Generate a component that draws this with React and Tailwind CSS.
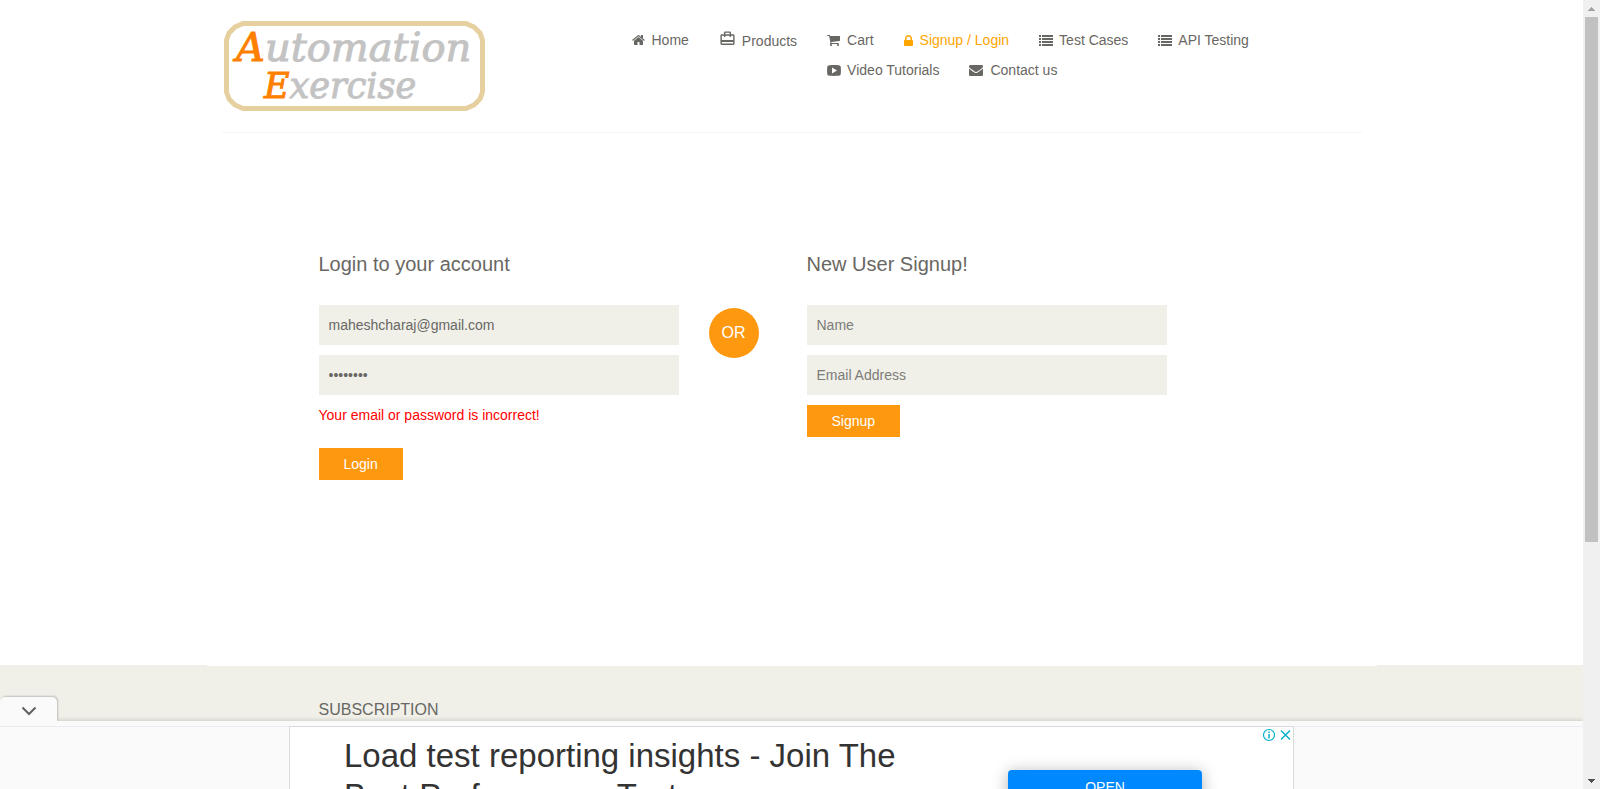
import React from "react";
import { MdCardTravel } from "react-icons/md";

function HomeIcon() {
  return (
    <svg width="13" height="10" viewBox="0 253 1664 1283" fill="currentColor" className="mr-[7px]" aria-hidden="true">
      <path d="M1408 992v480q0 26-19 45t-45 19H960v-384H704v384H320q-26 0-45-19t-19-45V992q0-1 .5-3t.5-3l575-474 575 474q1 2 1 6zm223-69l-62 74q-8 9-21 11h-3q-13 0-21-7L832 424l-692 577q-12 8-24 7-13-2-21-11l-62-74q-8-10-7-23.500T37 878l719-599q32-26 76-26t76 26l244 204V288q0-14 9-23t23-9h192q14 0 23 9t9 23v408l219 182q10 8 11 21.500t-7 23.500z" />
    </svg>
  );
}

function CartIcon() {
  return (
    <svg width="13" height="11" viewBox="0 256 1664 1408" fill="currentColor" className="mr-[7px]" aria-hidden="true">
      <path d="M640 1536q0 52-38 90t-90 38-90-38-38-90 38-90 90-38 90 38 38 90zm896 0q0 52-38 90t-90 38-90-38-38-90 38-90 90-38 90 38 38 90zm128-1088v512q0 24-16.500 42.500T1607 1024L563 1146q13 60 13 70 0 16-24 64h920q26 0 45 19t19 45-19 45-45 19H448q-26 0-45-19t-19-45q0-11 8-31.500t16-36 21.500-40T445 1207L268 384H64q-26 0-45-19T0 320t19-45 45-19h256q16 0 28.500 6.500T368 278t13 24.500 8 26 5.500 29.500 4.500 26h1201q26 0 45 19t19 45z" />
    </svg>
  );
}

function LockIcon() {
  return (
    <svg width="9" height="11" viewBox="0 128 1152 1408" fill="currentColor" className="mr-[7px]" aria-hidden="true">
      <path d="M320 768h512V576q0-106-75-181t-181-75-181 75-75 181v192zm832 96v576q0 40-28 68t-68 28H96q-40 0-68-28t-28-68V864q0-40 28-68t68-28h32V576q0-184 132-316t316-132 316 132 132 316v192h32q40 0 68 28t28 68z" />
    </svg>
  );
}

function EnvelopeIcon() {
  return (
    <svg width="14" height="11" viewBox="0 256 1792 1408" fill="currentColor" className="mr-[7px]" aria-hidden="true">
      <path d="M1792 710v794q0 66-47 113t-113 47H160q-66 0-113-47T0 1504V710q44 49 101 87 362 246 497 345 57 42 92.500 65.500t94.500 48T895 1280h2q52 0 110.500-24.500t94.500-48T1194.500 1142q170-123 498-345 57-39 100-87zm0-294q0 79-49 151t-122 123q-376 261-468 325-10 7-42.500 30.500t-54 38-52 32.500-57.500 27-50 9h-2q-23 0-50-9t-57.500-27-52-32.500-54-38T639 1015q-91-64-262-182.500T172 690q-62-42-117-115.500T0 438q0-78 41.500-130T160 256h1472q65 0 112.500 47t47.500 113z" />
    </svg>
  );
}

function ListIcon() {
  return (
    <svg width="14" height="11" viewBox="0 0 14 11" fill="currentColor" shapeRendering="crispEdges" className="mr-[6px]" aria-hidden="true">
      {[0, 3, 6, 9].map((y) => (
        <g key={y}>
          <rect x="0" y={y} width="2" height="2" />
          <rect x="3" y={y} width="11" height="2" />
        </g>
      ))}
    </svg>
  );
}

function PlayIcon() {
  return (
    <svg width="14" height="11" viewBox="0 0 14 11" fill="currentColor" className="mr-[6px]" aria-hidden="true">
      <path
        fillRule="evenodd"
        d="M2.5.2C5 0 9 0 11.500.2 13 .3 13.700 1 13.800 2.500 14 4.500 14 6.500 13.800 8.500 13.700 10 13 10.700 11.500 10.800 9 11 5 11 2.500 10.800 1 10.700.300 10 .200 8.500 0 6.500 0 4.500.200 2.500.300 1 1 .300 2.500.200ZM5 2.500V8.500L10 5.500Z"
      />
    </svg>
  );
}

function NavItem({ icon, children, active, className = "" }) {
  return (
    <li>
      <a
        href="#"
        className={`flex h-5 items-center whitespace-nowrap text-sm leading-5 ${
          active ? "text-[#ffa500]" : "text-[#696763]"
        } ${className}`}
      >
        {icon}
        {children}
      </a>
    </li>
  );
}

function Logo() {
  return (
    <a href="#" aria-label="Automation Exercise" className="block">
      <svg width="261" height="90" viewBox="0 0 261 90" fontFamily="'DejaVu Serif', serif" fontStyle="italic">
        <path
          d="M19 2.500H242L250 6 256 12 258.500 19V71L256 78 250 84 242 87.500H19L11 84 5 78 2.500 71V19L5 12 11 6Z"
          fill="#fff"
          stroke="#e6d0a0"
          strokeWidth="5"
          strokeLinejoin="round"
        />
        <text x="12" y="40" fontSize="40" fill="#c3c3c3" stroke="#c3c3c3">
          <tspan fill="#ff8000" stroke="#ff8000">A</tspan>utomation
        </text>
        <text x="40" y="77" fontSize="35" fill="#c3c3c3" stroke="#c3c3c3">
          <tspan fill="#ff8000" stroke="#ff8000">E</tspan>xercise
        </text>
      </svg>
    </a>
  );
}

function Header() {
  return (
    <header className="mx-auto w-full max-w-[1140px]">
      <div className="flex items-start border-b border-[#f5f5f5] pb-[21px] pt-[21px]">
        <div className="w-[410px] shrink-0 pl-[2px]">
          <Logo />
        </div>
        <nav className="flex pt-[9px]">
          <ul className="flex">
            <NavItem icon={<HomeIcon />} className="mr-[30px]">Home</NavItem>
            <NavItem icon={<MdCardTravel size={17} className="mb-[5px] mr-[6px]" />} className="mr-[30px] pt-[2px]">
              Products
            </NavItem>
          </ul>
          <ul className="flex max-w-[460px] flex-wrap gap-x-[30px] gap-y-[10px]">
            <NavItem icon={<CartIcon />}>Cart</NavItem>
            <NavItem active icon={<LockIcon />}>Signup / Login</NavItem>
            <NavItem icon={<ListIcon />}>Test Cases</NavItem>
            <NavItem icon={<ListIcon />}>API Testing</NavItem>
            <NavItem icon={<PlayIcon />}>Video Tutorials</NavItem>
            <NavItem icon={<EnvelopeIcon />}>Contact us</NavItem>
          </ul>
        </nav>
      </div>
    </header>
  );
}

const fieldClass =
  "block h-10 w-full bg-[#f0f0e9] px-[10px] text-sm text-[#696763] outline-none placeholder:text-[#7c7c78]";
const buttonClass = "block h-8 bg-[#fe980f] px-[25px] text-sm text-white";

function LoginForm() {
  return (
    <form className="w-[360px]" onSubmit={(e) => e.preventDefault()}>
      <h2 className="mb-[30px] text-xl leading-[22px] text-[#696763]">Login to your account</h2>
      <div className="flex flex-col gap-[10px]">
        <input type="email" aria-label="Email Address" defaultValue="maheshcharaj@gmail.com" className={fieldClass} />
        <input type="password" aria-label="Password" defaultValue="password" className={fieldClass} />
      </div>
      <p className="mt-[10px] text-sm leading-5 text-[#ff0000]">Your email or password is incorrect!</p>
      <button type="submit" className={`${buttonClass} mt-[23px]`}>Login</button>
    </form>
  );
}

function SignupForm() {
  return (
    <form className="w-[360px]" onSubmit={(e) => e.preventDefault()}>
      <h2 className="mb-[30px] text-xl leading-[22px] text-[#696763]">New User Signup!</h2>
      <div className="flex flex-col items-start gap-[10px]">
        <input type="text" aria-label="Name" placeholder="Name" className={fieldClass} />
        <input type="email" aria-label="Email Address" placeholder="Email Address" className={fieldClass} />
        <button type="submit" className={buttonClass}>Signup</button>
      </div>
    </form>
  );
}

function AdBanner() {
  return (
    <aside className="fixed bottom-0 left-0 right-[17px] h-[68px] bg-[#fafafa] shadow-[0_-1px_4px_rgba(0,0,0,0.15)]">
      <button
        type="button"
        aria-label="Collapse advertisement"
        className="absolute bottom-full left-0 flex h-6 w-[57px] items-center justify-center rounded-t-[5px] bg-[#fafafa] pt-1 shadow-[1px_-1px_2px_rgba(0,0,0,0.2)]"
      >
        <svg width="16" height="10" viewBox="0 0 16 10" fill="none" stroke="#616161" strokeWidth="2" aria-hidden="true">
          <path d="M1.500 1.500 8 8 14.500 1.500" />
        </svg>
      </button>
      <div className="relative h-full overflow-hidden bg-[#fafafa] pt-[5px]">
        <div className="border-t border-[#ececec]">
          <div className="relative mx-auto -mt-px flex h-[120px] w-[1005px] items-start border border-[#dadada] bg-white pl-[54px]">
            <p className="w-[620px] pt-[9px] text-[33px] leading-[40px] text-[#333]">
              Load test reporting insights - Join The Best Performance Test
            </p>
            <a
              href="#"
              className="ml-[44px] mt-[43px] flex h-[34px] w-[194px] items-center justify-center rounded-[4px] bg-[#0088ff] text-sm text-white shadow-[0_2px_16px_rgba(0,0,0,0.3)]"
            >
              OPEN
            </a>
            <div className="absolute right-[2px] top-[1px] flex items-center gap-1 text-[#00aecd]">
              <svg width="14" height="14" viewBox="0 0 14 14" fill="none" stroke="currentColor" aria-hidden="true">
                <circle cx="7" cy="7" r="5.500" strokeWidth="1.200" />
                <path d="M7 6V10.500M7 3.500V5" strokeWidth="1.500" />
              </svg>
              <svg width="11" height="14" viewBox="0 0 11 14" fill="none" stroke="currentColor" strokeWidth="1.400" aria-hidden="true">
                <path d="M1 2.500 10 11.500M10 2.500 1 11.500" />
              </svg>
            </div>
          </div>
        </div>
      </div>
    </aside>
  );
}

function Scrollbar() {
  return (
    <div aria-hidden="true" className="fixed inset-y-0 right-0 flex w-[17px] flex-col bg-[#f0f0f0]">
      <div className="flex h-[17px] items-center justify-center">
        <svg width="7" height="4" viewBox="0 0 7 4" fill="#a3a3a3" shapeRendering="crispEdges">
          <path d="M3 0h1v1h1v1h1v1h1v1H0V3h1V2h1V1h1z" />
        </svg>
      </div>
      <div className="flex-1">
        <div className="ml-[2px] h-[69.5%] w-[13px] bg-[#c1c1c1]" />
      </div>
      <div className="flex h-[17px] items-center justify-center">
        <svg width="7" height="4" viewBox="0 0 7 4" fill="#505050" shapeRendering="crispEdges">
          <path d="M0 0h7v1H6v1H5v1H4v1H3V3H2V2H1V1H0z" />
        </svg>
      </div>
    </div>
  );
}

export default function App() {
  return (
    <div className="flex min-h-screen flex-col bg-white pr-[17px] font-['Liberation_Sans',Arial,sans-serif]">
      <Header />
      <main className="mx-auto flex w-full max-w-[1170px] items-start pb-[185px] pl-[112px] pt-[120px]">
        <LoginForm />
        <div className="ml-[30px] mr-[48px] mt-[55px] flex h-[50px] w-[50px] items-center justify-center rounded-full bg-[#fe980f] text-base text-white">
          OR
        </div>
        <SignupForm />
      </main>
      <footer className="flex-1 bg-[#f0f0e9]">
        <div className="mx-auto h-px max-w-[1170px] bg-white" />
        <div className="mx-auto max-w-[1170px] pl-[112px] pt-[34px]">
          <h2 className="text-base leading-5 text-[#696763]">SUBSCRIPTION</h2>
        </div>
      </footer>
      <AdBanner />
      <Scrollbar />
    </div>
  );
}
